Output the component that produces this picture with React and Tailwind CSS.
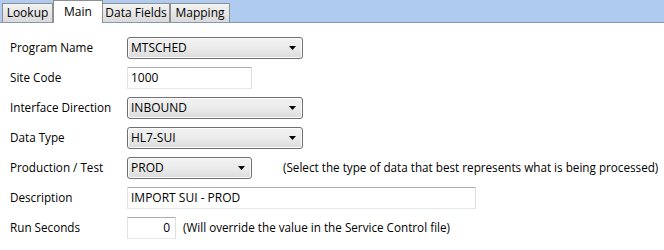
import React from "react";

const font = { fontFamily: '"Open Sans", "Noto Sans", sans-serif' };

function Select({ value, w }) {
  return (
    <div
      className={`${w} shrink-0 h-[22px] flex items-center justify-between rounded-[3px] border border-[#707070] bg-gradient-to-b from-[#f2f2f2] via-[#ebebeb] to-[#dbdbdb] pl-[3px] pr-[6px] text-[12px] text-black shadow-[inset_0_0_0_1px_#fcfcfc]`}
    >
      <span>{value}</span>
      <svg width="7" height="4" viewBox="0 0 7 4"><path d="M0 0H7L3.5 4Z" fill="#000" /></svg>
    </div>
  );
}

function Input({ value, w, right }) {
  return (
    <div
      className={`${w} shrink-0 h-[22px] flex items-center border border-[#abadb3] border-l-[#e2e3ea] border-r-[#dbdfe6] border-b-[#e3e9ef] bg-white px-[3px] text-[12px] text-black ${right ? "justify-end pr-[5px]" : ""}`}
    >
      {value}
    </div>
  );
}

function Row({ label, children }) {
  return (
    <div className="flex items-center h-[30px]">
      <div className="w-[117px] shrink-0 whitespace-nowrap text-[11.7px] text-black">{label}</div>
      {children}
    </div>
  );
}

export default function App() {
  return (
    <div className="w-[664px] h-[250px] bg-white overflow-hidden" style={font}>
      <div className="h-[23px] bg-[#afcbef] border-b border-[#8497b5] flex items-end pl-[2px] relative">
        <div className="h-[19px] w-[51px] border border-b-0 border-[#8e8f8f] bg-gradient-to-b from-[#f2f2f2] to-[#dadada] text-[12px] flex items-center justify-center">Lookup</div>
        <div className="h-[23px] w-[50px] border border-b-0 border-[#8e8f8f] bg-white text-[12px] flex items-start justify-center pt-[2px] -mb-px relative z-10">Main</div>
        <div className="h-[19px] w-[67px] border border-b-0 border-l-0 border-[#8e8f8f] bg-gradient-to-b from-[#f2f2f2] to-[#dadada] text-[12px] flex items-center justify-center">Data Fields</div>
        <div className="h-[19px] w-[60px] border border-b-0 border-[#8e8f8f] bg-gradient-to-b from-[#f2f2f2] to-[#dadada] text-[12px] flex items-center justify-center">Mapping</div>
      </div>
      <div className="pl-[10px] pt-[10px] flex flex-col">
        <Row label="Program Name"><Select value="MTSCHED" w="w-[176px]" /></Row>
        <Row label="Site Code"><Input value="1000" w="w-[125px]" /></Row>
        <Row label="Interface Direction"><Select value="INBOUND" w="w-[176px]" /></Row>
        <Row label="Data Type"><Select value="HL7-SUI" w="w-[176px]" /></Row>
        <Row label="Production / Test">
          <Select value="PROD" w="w-[125px]" />
          <span className="ml-[31px] text-[11.7px] text-black whitespace-nowrap">(Select the type of data that best represents what is being processed)</span>
        </Row>
        <Row label="Description"><Input value="IMPORT SUI - PROD" w="w-[349px]" /></Row>
        <Row label="Run Seconds">
          <Input value="0" w="w-[49px]" right />
          <span className="ml-[7px] text-[11.7px] text-black whitespace-nowrap">(Will override the value in the Service Control file)</span>
        </Row>
      </div>
    </div>
  );
}
